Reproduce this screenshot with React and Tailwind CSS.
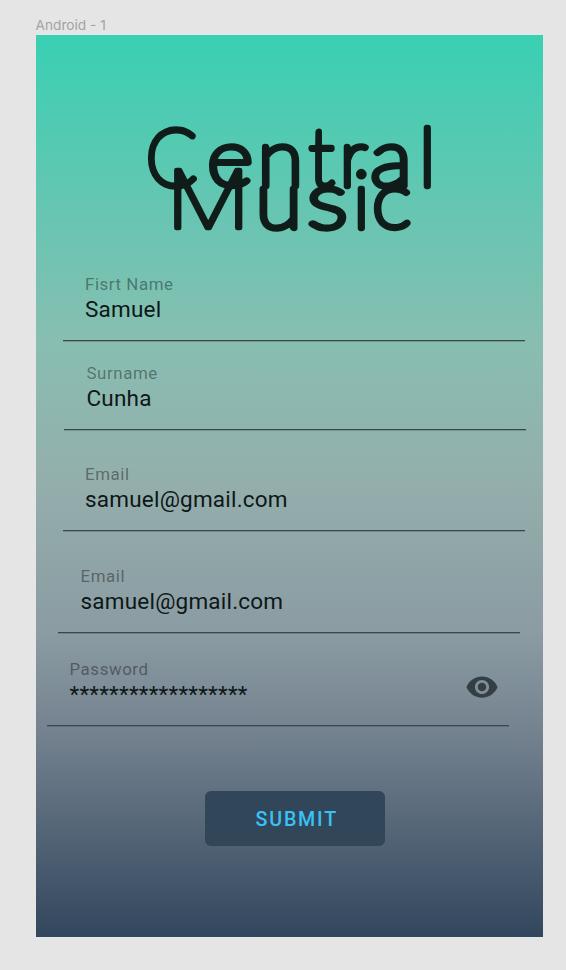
import React from "react";

const fields = [
  { label: "Fisrt Name", value: "Samuel", box: "ml-[27px] mt-[28.5px]" },
  { label: "Surname", value: "Cunha", box: "ml-[28.5px] mt-[12px]" },
  { label: "Email", value: "samuel@gmail.com", box: "ml-[27px] mt-[24.5px]" },
  { label: "Email", value: "samuel@gmail.com", box: "ml-[22.5px] mt-[24.5px]" },
  { label: "Password", value: "******************", box: "ml-[11.5px] mt-[16px]", eye: true },
];

// Each glyph of the wordmark has its own origin and horizontal stretch.
const glyphs = [
  { c: "C", x: 145.3, y: 185, sx: 0.94 },
  { c: "e", x: 206.5, y: 185, sx: 1.12 },
  { c: "n", x: 257, y: 185, sx: 1.05 },
  { c: "t", x: 308.5, y: 185, sx: 0.95 },
  { c: "r", x: 339, y: 185, sx: 1 },
  { c: "a", x: 369.8, y: 185, sx: 1.1 },
  { c: "l", x: 418.5, y: 185, sx: 1 },
  { c: "M", x: 165.5, y: 227.5, sx: 1.18, font: "font-[Inter]", w: 4.4 },
  { c: "u", x: 255, y: 227, sx: 1.07 },
  { c: "s", x: 306.5, y: 227, sx: 1.22 },
  { c: "i", x: 352.5, y: 227, sx: 1 },
  { c: "c", x: 371.5, y: 227, sx: 1.05 },
];

function Wordmark() {
  return (
    <svg
      className="block h-[200px] w-full shrink-0 overflow-visible font-[Lato] font-thin"
      viewBox="35.5 34.3 507.5 200"
      fill="#0f1c1a"
      stroke="#0f1c1a"
      strokeLinejoin="round"
      fontSize="80"
    >
      {glyphs.map((g, i) => (
        <text key={i} className={g.font} strokeWidth={g.w || 6.3} transform={`translate(${g.x} ${g.y}) scale(${g.sx} 1)`}>
          {g.c}
        </text>
      ))}
    </svg>
  );
}

function Field({ label, value, box, eye }) {
  return (
    <div className={`flex h-[77px] w-[462px] shrink-0 items-start justify-between border-b border-[#3b4749] pl-[22.5px] pr-[10px] shadow-[0_1px_0_rgba(40,50,52,0.25)] ${box}`}>
      <div className="flex flex-col pt-[9px] whitespace-nowrap">
        <span className="text-[16.9px] leading-[22px] tracking-[0.56px] text-black/40">{label}</span>
        <span className="text-[22.5px] leading-[28px] tracking-[0.21px] text-[#0e1717]">{value}</span>
      </div>
      {eye && (
        <svg className="mt-[21.5px] size-[34px]" viewBox="0 0 24 24" fill="#343f45">
          <path d="M12 4.5C7 4.5 2.73 7.61 1 12c1.73 4.39 6 7.5 11 7.5s9.27-3.11 11-7.5c-1.73-4.39-6-7.5-11-7.5zM12 17c-2.76 0-5-2.24-5-5s2.24-5 5-5 5 2.24 5 5-2.24 5-5 5zm0-8c-1.66 0-3 1.34-3 3s1.34 3 3 3 3-1.34 3-3-1.34-3-3-3z" />
        </svg>
      )}
    </div>
  );
}

export default function App() {
  return (
    <div className="flex h-[970px] w-[566px] flex-col overflow-hidden bg-[#e5e5e5] pl-[35.5px] font-[Roboto,sans-serif]">
      <div className="flex h-[35px] shrink-0 items-start pt-[15px] font-[Inter,sans-serif] text-[13.7px] leading-[20px] text-[#a3a3a3]">
        Android - 1
      </div>
      <main className="flex h-[902px] w-[507.5px] shrink-0 flex-col bg-[linear-gradient(180deg,#39d0b3_0%,#88beb1_34%,#94aeac_50%,#8b9ca3_66%,#758390_77%,#32465d_100%)]">
        <Wordmark />
        {fields.map((f, i) => (
          <Field key={i} {...f} />
        ))}
        <button className="mt-[65px] ml-[169px] h-[55px] w-[180.5px] shrink-0 rounded-[6px] bg-[#32465a] pt-[3px] pl-[4px] text-[19.7px] font-medium tracking-[1.76px] text-[#38c2f5]">
          SUBMIT
        </button>
      </main>
    </div>
  );
}
